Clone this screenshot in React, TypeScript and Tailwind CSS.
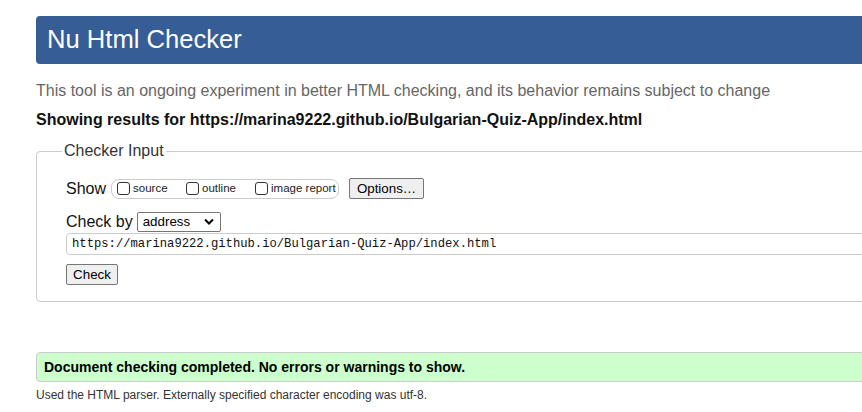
import React from "react";

const url = "https://marina9222.github.io/Bulgarian-Quiz-App/index.html";

function Box({ label, w }: { label: string; w: string }) {
  return (
    <label className={`flex items-center gap-[3px] text-[11.5px] text-[#222] whitespace-nowrap shrink-0 ${w}`}>
      <span className="w-[13px] h-[13px] border border-[#333] rounded-[3px] bg-white shrink-0" />
      {label}
    </label>
  );
}

export default function App() {
  return (
    <div className="w-[862px] h-[412px] overflow-hidden bg-white pl-[36px] pt-[16px] font-['Liberation_Sans',Arial,sans-serif] text-[#111]">
      {/* Header */}
      <header className="h-[48px] w-[860px] rounded-l-[4px] bg-[#365d95] flex items-center pl-[11px]">
        <h1 className="text-[25.6px] text-white leading-none">Nu Html Checker</h1>
      </header>

      <p className="mt-[17px] text-[16px] leading-[20px] text-[#666]">
        This tool is an ongoing experiment in better HTML checking, and its behavior remains subject to change
      </p>
      <p className="mt-[9px] text-[16px] leading-[20px] font-bold text-[#111]">
        Showing results for {url}
      </p>

      {/* Checker input */}
      <fieldset className="mt-[12px] w-[860px] border border-[#ccc] rounded-l-[4px] pb-[16px]">
        <legend className="ml-[25px] px-[2px] text-[16px] leading-[18px] text-[#333]">Checker Input</legend>

        <div className="pl-[29px]">
          <div className="mt-[18px] flex items-center h-[21px]">
            <span className="text-[16px] text-[#111]">Show</span>
            <div className="ml-[5px] w-[228px] h-[20px] border border-[#ccc] rounded-[8px] flex items-center pl-[5px] overflow-hidden">
              <Box label="source" w="w-[69px]" />
              <Box label="outline" w="w-[69px]" />
              <Box label="image report" w="w-[80px]" />
            </div>
            <button className="ml-[10px] w-[75px] h-[21px] bg-[#efefef] border border-[#767676] rounded-[2px] text-[13.33px] text-black">
              Options…
            </button>
          </div>

          <div className="mt-[12px] flex items-center h-[21px]">
            <span className="text-[16px] text-[#111]">Check by</span>
            <div className="ml-[4px] w-[84px] h-[20px] border border-[#767676] rounded-[2px] flex items-center justify-between pl-[5px] pr-[6px] text-[13.33px] text-black">
              address
              <svg width="10" height="7" viewBox="0 0 10 7" fill="none">
                <path d="M1 1.5l4 4 4-4" stroke="#000" strokeWidth="2" />
              </svg>
            </div>
          </div>

          <input
            readOnly
            value={url}
            className="mt-[1px] block w-[820px] h-[22px] border border-[#ccc] rounded-l-[4px] pl-[5px] font-['Liberation_Mono',monospace] text-[12.2px] text-[#111] outline-none"
          />

          <button className="mt-[9px] block w-[52px] h-[21px] bg-[#efefef] border border-[#767676] rounded-[2px] text-[13.33px] text-black">
            Check
          </button>
        </div>
      </fieldset>

      {/* Result */}
      <div className="mt-[50px] w-[860px] h-[30px] bg-[#ccffcc] border border-[#ccc] rounded-l-[4px] flex items-center pl-[7px]">
        <p className="text-[14px] font-bold text-black">Document checking completed. No errors or warnings to show.</p>
      </div>
      <p className="mt-[6px] text-[12px] leading-[14px] text-[#333]">
        Used the HTML parser. Externally specified character encoding was utf-8.
      </p>
    </div>
  );
}
